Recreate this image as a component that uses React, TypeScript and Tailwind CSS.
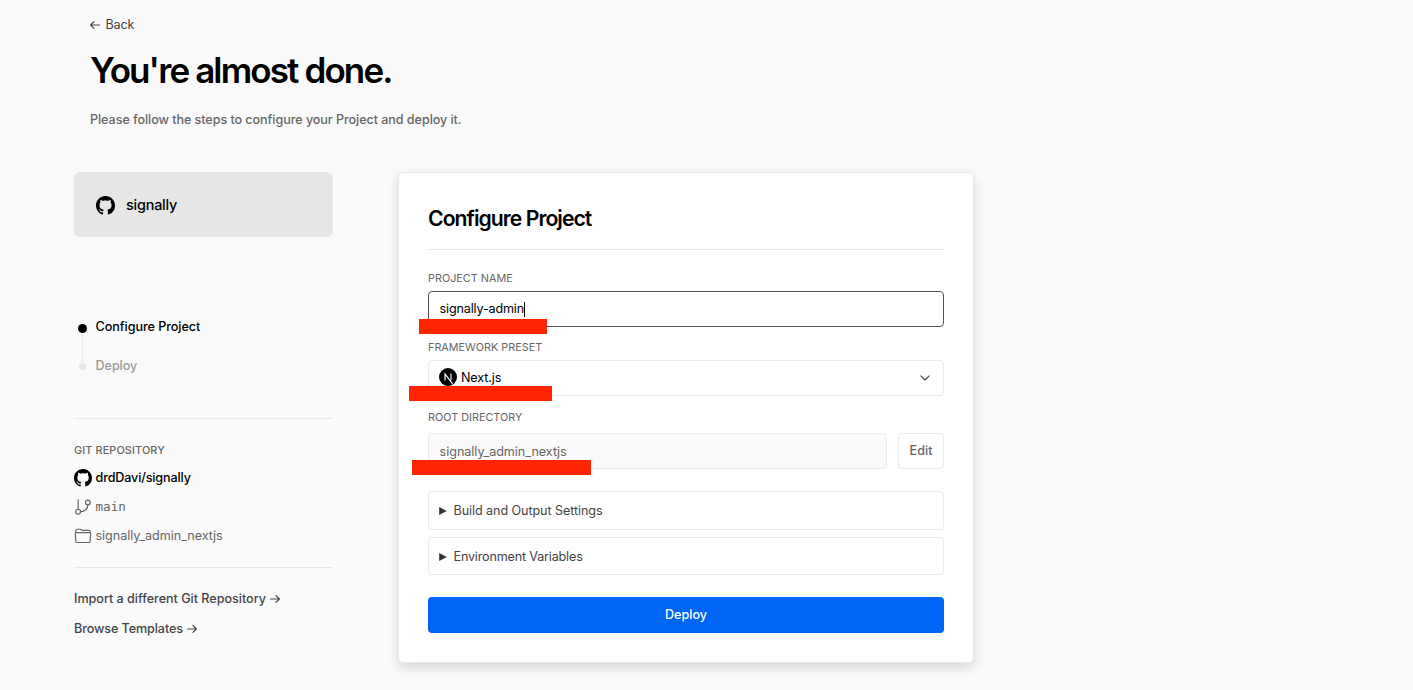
import React from "react";

function GithubMark({ className }: { className: string }) {
  return (
    <svg viewBox="0 0 16 16" fill="currentColor" className={className} aria-hidden="true">
      <path d="M8 0C3.58 0 0 3.58 0 8c0 3.54 2.29 6.53 5.47 7.59.4.07.55-.17.55-.38 0-.19-.01-.82-.01-1.49-2.01.37-2.53-.49-2.69-.94-.09-.23-.48-.94-.82-1.13-.28-.15-.68-.52-.01-.53.63-.01 1.08.58 1.23.82.72 1.21 1.87.87 2.33.66.07-.52.28-.87.51-1.07-1.78-.2-3.64-.89-3.64-3.95 0-.87.31-1.59.82-2.15-.08-.2-.36-1.02.08-2.12 0 0 .67-.21 2.2.82.64-.18 1.32-.27 2-.27s1.36.09 2 .27c1.53-1.04 2.2-.82 2.2-.82.44 1.1.16 1.92.08 2.12.51.56.82 1.27.82 2.15 0 3.07-1.87 3.75-3.65 3.95.29.25.54.73.54 1.48 0 1.07-.01 1.93-.01 2.2 0 .21.15.46.55.38A8.01 8.01 0 0 0 16 8c0-4.42-3.58-8-8-8z" />
    </svg>
  );
}

function Arrow({ className }: { className: string }) {
  return (
    <svg viewBox="0 0 10 8" fill="none" stroke="currentColor" strokeWidth="1.15" strokeLinecap="round" strokeLinejoin="round" className={className} aria-hidden="true">
      <path d="M.6 4h8.7M6 .6 9.4 4 6 7.4" />
    </svg>
  );
}

function BranchIcon() {
  return (
    <svg viewBox="0 0 24 24" fill="none" stroke="currentColor" strokeWidth="1.6" strokeLinecap="round" strokeLinejoin="round" className="mb-px size-[18px]" aria-hidden="true">
      <path d="M5.5 2.5V15M18.5 9a9 9 0 0 1-10 9" />
      <circle cx="18.5" cy="6" r="3.2" />
      <circle cx="5.5" cy="18.2" r="3.2" />
    </svg>
  );
}

function FolderIcon() {
  return (
    <svg viewBox="0 0 18 18" fill="none" stroke="currentColor" strokeWidth="1.15" strokeLinejoin="round" className="mb-px size-[18px]" aria-hidden="true">
      <path d="M1.9 6V3.2c0-.6.4-1 1-1h3.5l1.6 1.1h7c.7 0 1.1.4 1.1 1.1V6" />
      <path d="M1.3 6.4c0-.5.3-.8.8-.8h13.8c.5 0 .8.3.8.8l-.6 8.2c0 .6-.4.9-1 .9H2.9c-.6 0-1-.3-1-.9z" />
    </svg>
  );
}

function NextMark() {
  return (
    <svg viewBox="0 0 18 18" className="mb-[2px] size-[18px] shrink-0" aria-hidden="true">
      <circle cx="9" cy="9" r="9" />
      <path d="M6 12.6V6l7.6 9.9M12 5.6v6.6" fill="none" stroke="#fff" strokeWidth="1.15" />
    </svg>
  );
}

function Redaction({ className }: { className: string }) {
  return <span className={`absolute h-[15px] bg-[#ff2500] ${className}`} />;
}

function FieldLabel({ children }: { children: React.ReactNode }) {
  return <div className="h-[14px] text-[10.8px] leading-[14px] tracking-[0.02px] text-[#666]">{children}</div>;
}

function Disclosure({ label, className }: { label: string; className: string }) {
  return (
    <div className={`flex items-center rounded-[4px] border border-[#eaeaea] pl-[10px] text-[12.6px] leading-5 text-[#444] ${className}`}>
      <svg viewBox="0 0 8 8" fill="#333" className="mr-[6.5px] size-2" aria-hidden="true">
        <path d="M.2 0 7.8 4 .2 8z" />
      </svg>
      <span>{label}</span>
    </div>
  );
}

function Sidebar() {
  return (
    <aside className="w-[259px]">
      <div className="flex h-[65px] items-center rounded-[6px] bg-[#e6e6e6] pl-[22px] text-black">
        <GithubMark className="mt-[2px] size-[19px]" />
        <span className="ml-[11px] text-[14.4px] font-medium tracking-[-0.2px]">signally</span>
      </div>

      <div className="mt-[80px] flex">
        <div className="flex w-[21.5px] flex-col items-center pr-[4.5px] pt-[7px]">
          <span className="size-[9px] rounded-full bg-black" />
          <span className="h-[30px] w-px bg-[#eaeaea]" />
          <span className="size-[7px] rounded-full bg-[#e6e6e6]" />
        </div>
        <div className="text-[12.6px] font-medium leading-5 tracking-[-0.05px]">
          <div className="text-black">Configure Project</div>
          <div className="mt-[19px] text-[#999]">Deploy</div>
        </div>
      </div>

      <div className="mt-[42px] border-t border-[#e6e6e6] pt-[24px]">
        <div className="text-[10.8px] font-medium leading-[16px] tracking-[0.15px] text-[#666]">GIT REPOSITORY</div>
        <div className="mt-[10px] flex h-[19px] items-center gap-[3.5px] text-[12.6px] font-medium text-black">
          <GithubMark className="mb-px size-[18px]" />
          <span className="tracking-[-0.14px]">drdDavi/signally</span>
        </div>
        <div className="mt-[10px] flex h-[19px] items-center gap-[3.5px] text-[#666]">
          <BranchIcon />
          <span className="font-['DejaVu_Sans_Mono',monospace] text-[12.6px]">main</span>
        </div>
        <div className="mt-[10px] flex h-[19px] items-center gap-[3.5px] text-[12.6px] text-[#666]">
          <FolderIcon />
          <span className="tracking-[-0.04px]">signally_admin_nextjs</span>
        </div>
      </div>

      <div className="mt-[21px] border-t border-[#e6e6e6] pt-[21px] text-[12.6px] font-medium leading-5 text-[#444]">
        <div className="flex items-center gap-[4px] tracking-[-0.02px]">
          Import a different Git Repository
          <Arrow className="h-2 w-[10px]" />
        </div>
        <div className="mt-[10px] flex items-center gap-[4px] tracking-[-0.1px]">
          Browse Templates
          <Arrow className="h-2 w-[10px]" />
        </div>
      </div>
    </aside>
  );
}

function ConfigureCard() {
  return (
    <section className="h-[491px] w-[576px] rounded-[5px] border border-[#e8e8e8] bg-white px-[29px] shadow-[0_5px_12px_rgba(0,0,0,0.14)]">
      <h2 className="mt-[31px] text-[21.2px] font-semibold leading-[28px] tracking-[-0.97px] text-black">Configure Project</h2>
      <div className="mt-[17px] border-t border-[#e6e6e6] pt-[22px]">
        <FieldLabel>PROJECT NAME</FieldLabel>
        <div className="relative mt-[5px] flex h-9 items-center rounded-[4px] border border-[#555] pl-[10.6px] text-[12.6px] tracking-[-0.17px] text-black">
          <span>signally-admin</span>
          <span className="-ml-[0.4px] h-[15px] w-px bg-black" />
          <Redaction className="left-[-10px] top-[27px] w-[128px]" />
        </div>
      </div>

      <div className="mt-[14px]">
        <FieldLabel>FRAMEWORK PRESET</FieldLabel>
        <div className="relative mt-[5px] flex h-9 items-center rounded-[4px] border border-[#eaeaea] pl-[10px] pr-[13px] text-[12.6px] text-black">
          <NextMark />
          <span className="ml-[4px] flex-1 tracking-[-0.12px]">Next.js</span>
          <svg viewBox="0 0 10 6" fill="none" stroke="#444" strokeWidth="1.1" strokeLinecap="round" strokeLinejoin="round" className="h-[6px] w-[10px]" aria-hidden="true">
            <path d="M.8.8 5 5 9.2.8" />
          </svg>
          <Redaction className="left-[-20px] top-[25px] w-[143px]" />
        </div>
      </div>

      <div className="mt-[15px]">
        <FieldLabel>ROOT DIRECTORY</FieldLabel>
        <div className="mt-[8px] flex h-9 gap-[11px] text-[12.6px] text-[#666]">
          <div className="relative flex flex-1 items-center rounded-[4px] border border-[#eaeaea] bg-[#fafafa] pl-[10.6px]">
            <span className="pt-[2px] tracking-[-0.04px]">signally_admin_nextjs</span>
            <Redaction className="left-[-17px] top-[26px] w-[179px]" />
          </div>
          <button className="w-[46px] rounded-[4px] border border-[#eaeaea] font-medium">Edit</button>
        </div>
      </div>

      <Disclosure label="Build and Output Settings" className="mt-[22px] h-[39px] tracking-[-0.08px]" />
      <Disclosure label="Environment Variables" className="mt-[7px] h-[38px] pt-px tracking-[-0.18px]" />
      <button className="mt-[22px] h-9 w-full rounded-[4px] bg-[#0064f4] text-[12.6px] font-medium text-white">Deploy</button>
    </section>
  );
}

export default function App() {
  return (
    <div className="h-[690px] w-full overflow-hidden bg-[#fafafa] font-[Inter,sans-serif]">
      <header className="h-[172px] pl-[90px] pt-[15px]">
        <a className="flex h-5 items-center gap-[5.5px] text-[12.6px] tracking-[-0.15px] text-[#444]">
          <Arrow className="h-2 w-[10px] rotate-180" />
          <span>Back</span>
        </a>
        <h1 className="mt-[13px] text-[35px] font-semibold leading-[44px] tracking-[-1.88px] text-black">You're almost done.</h1>
        <p className="mt-[18px] text-[12.6px] font-medium leading-5 tracking-[-0.065px] text-[#666]">Please follow the steps to configure your Project and deploy it.</p>
      </header>
      <main className="flex gap-[65px] pl-[74px]">
        <Sidebar />
        <ConfigureCard />
      </main>
    </div>
  );
}
